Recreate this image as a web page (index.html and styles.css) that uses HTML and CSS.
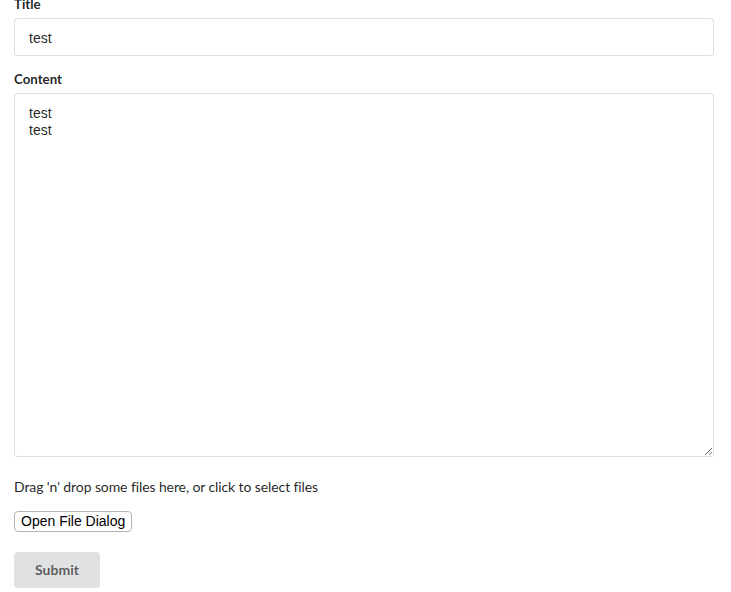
FILE: index.html
```html
<!DOCTYPE html>
<html lang="en">
<head>
<meta charset="utf-8">
<title>Form</title>
<link rel="stylesheet" href="styles.css">
</head>
<body>
<form class="form">
  <div class="field">
    <label class="label" for="title">Title</label>
    <input class="input" id="title" type="text" value="test">
  </div>
  <div class="field">
    <label class="label" for="content">Content</label>
    <textarea class="textarea" id="content">test
test</textarea>
  </div>
  <div class="dropzone">
    <p class="drop-text">Drag 'n' drop some files here, or click to select files</p>
    <button type="button" class="file-btn">Open File Dialog</button>
  </div>
  <button type="submit" class="submit-btn">Submit</button>
</form>
</body>
</html>
```

FILE: styles.css
```css
html, body {
  margin: 0;
  padding: 0;
  background: #ffffff;
}

body {
  font-family: Lato, "Liberation Sans", sans-serif;
  font-size: 14px;
  color: rgba(0, 0, 0, 0.87);
}

.form {
  display: flex;
  flex-direction: column;
  align-items: flex-start;
  padding: 0 17px 0 14px;
  margin-top: -7px;
}

.field {
  display: flex;
  flex-direction: column;
  align-self: stretch;
  margin-bottom: 12px;
}

.label {
  display: block;
  font-family: Lato, sans-serif;
  font-weight: 700;
  font-size: 13.3px;
  line-height: 22px;
  margin-bottom: 3px;
  color: rgba(0, 0, 0, 0.87);
}

.input,
.textarea {
  box-sizing: border-box;
  width: 100%;
  margin: 0;
  border: 1px solid rgba(34, 36, 38, 0.15);
  border-radius: 4px;
  background: #ffffff;
  color: rgba(0, 0, 0, 0.87);
  font-family: "Liberation Sans", Arial, sans-serif;
  font-size: 14px;
  outline: none;
}

.input {
  height: 38px;
  padding: 10px 14px 9px;
  line-height: 17px;
}

.textarea {
  height: 364px;
  padding: 11px 14px;
  line-height: 17px;
  resize: vertical;
}

.dropzone {
  display: flex;
  flex-direction: column;
  align-items: flex-start;
  margin-top: 8px;
}

.drop-text {
  margin: 0 0 14px 0;
  font-family: Lato, sans-serif;
  font-size: 14px;
  line-height: 20px;
  letter-spacing: -0.1px;
  color: rgba(0, 0, 0, 0.87);
}

.file-btn {
  box-sizing: border-box;
  height: 21px;
  padding: 0 6px;
  margin: 0;
  border: 1px solid #b5b5b5;
  border-radius: 4px;
  background: #ffffff;
  color: #000000;
  font-family: "Liberation Sans", Arial, sans-serif;
  font-size: 14px;
  line-height: 19px;
}

.submit-btn {
  box-sizing: border-box;
  margin-top: 20px;
  height: 36px;
  width: 86px;
  padding: 0;
  border: none;
  border-radius: 4px;
  background: #e0e1e2;
  color: rgba(0, 0, 0, 0.6);
  font-family: Lato, sans-serif;
  font-weight: 700;
  font-size: 14px;
  line-height: 36px;
  text-align: center;
}
```
